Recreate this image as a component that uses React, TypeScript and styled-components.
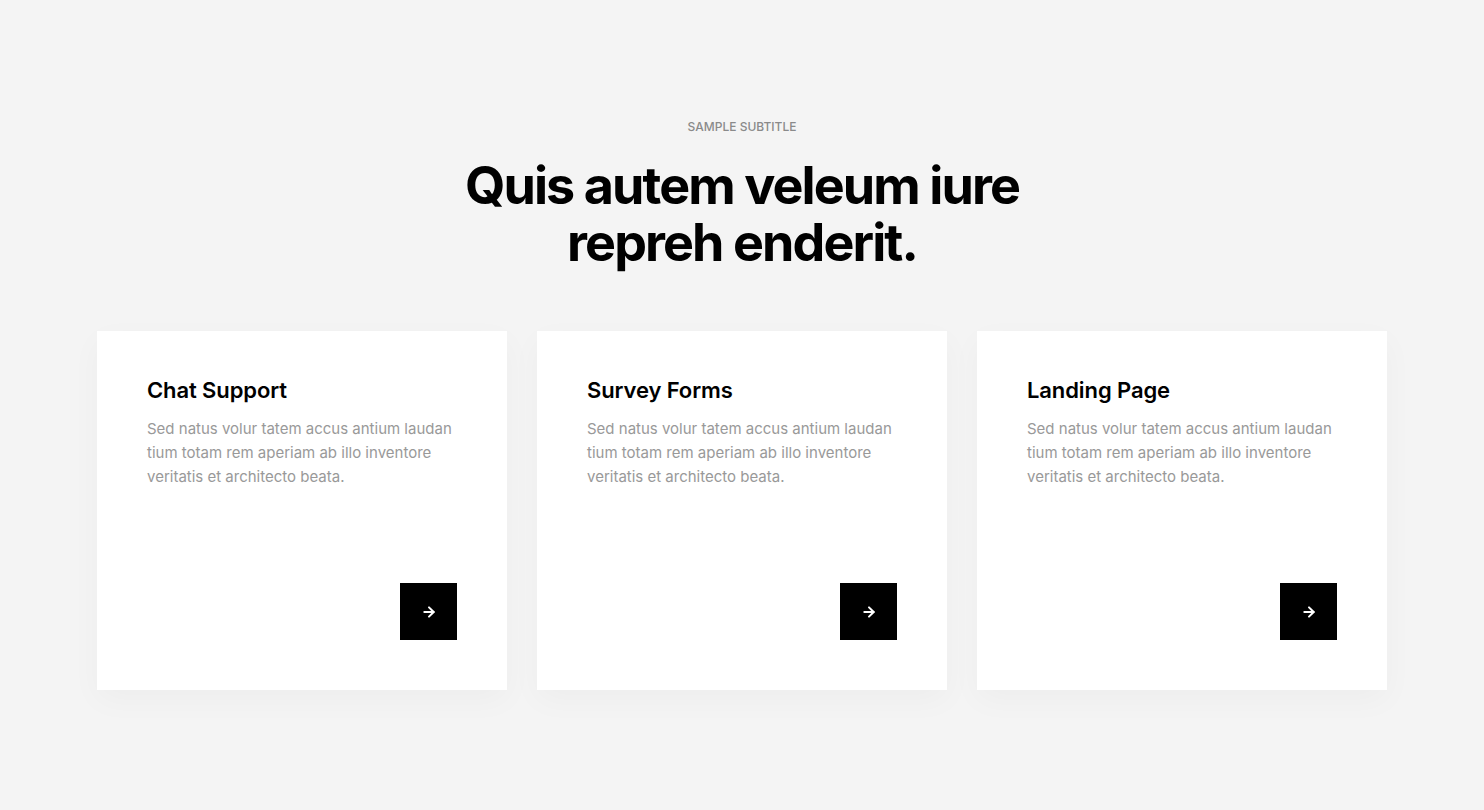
import styled, { createGlobalStyle } from "styled-components";
import { ArrowRight } from "lucide-react";

const GlobalStyle = createGlobalStyle`
    body {
        margin: 0;
        background-color: #f4f4f4;
        font-family: Inter, "Noto Sans", sans-serif;
    }
`;

const Section = styled.section`
    padding: 119px 97px 120px;
    display: flex;
    flex-direction: column;
    align-items: center;
`;

const Subtitle = styled.div`
    font-size: 12px;
    line-height: 16px;
    font-weight: 500;
    color: #8a8a8a;
    text-transform: uppercase;
`;

const Heading = styled.h2`
    margin: 22px 0 0;
    font-size: 52px;
    line-height: 57px;
    font-weight: 700;
    letter-spacing: -1.9px;
    color: #000;
    text-align: center;
`;

const Cards = styled.div`
    margin-top: 60px;
    display: grid;
    grid-template-columns: repeat(3, 410px);
    gap: 30px;
`;

const Card = styled.div`
    background-color: #fff;
    height: 359px;
    box-sizing: border-box;
    padding: 45px 50px 50px;
    display: flex;
    flex-direction: column;
    box-shadow: 0 10px 30px rgba(0, 0, 0, 0.03);
`;

const CardTitle = styled.h3`
    margin: 0;
    font-size: 22px;
    line-height: 28px;
    font-weight: 600;
    letter-spacing: -0.1px;
    color: #000;
`;

const CardText = styled.p`
    margin: 13px 0 0;
    font-size: 15px;
    line-height: 24px;
    color: #999;
    letter-spacing: 0;
`;

const ArrowButton = styled.button`
    margin-top: auto;
    align-self: flex-end;
    width: 57px;
    height: 57px;
    border: none;
    background-color: #000;
    color: #fff;
    display: flex;
    align-items: center;
    justify-content: center;
    cursor: pointer;
    padding: 0;
`;

const cards = ["Chat Support", "Survey Forms", "Landing Page"];

function App(): JSX.Element {
    return (
        <>
            <GlobalStyle />
            <Section>
                <Subtitle>Sample Subtitle</Subtitle>
                <Heading>
                    Quis autem veleum iure
                    <br />
                    repreh enderit.
                </Heading>
                <Cards>
                    {cards.map(title => (
                        <Card key={title}>
                            <CardTitle>{title}</CardTitle>
                            <CardText>
                                Sed natus volur tatem accus antium laudan
                                <br />
                                tium totam rem aperiam ab illo inventore
                                <br />
                                veritatis et architecto beata.
                            </CardText>
                            <ArrowButton aria-label="Open">
                                <ArrowRight size={16} strokeWidth={3} />
                            </ArrowButton>
                        </Card>
                    ))}
                </Cards>
            </Section>
        </>
    );
}

export default App;
